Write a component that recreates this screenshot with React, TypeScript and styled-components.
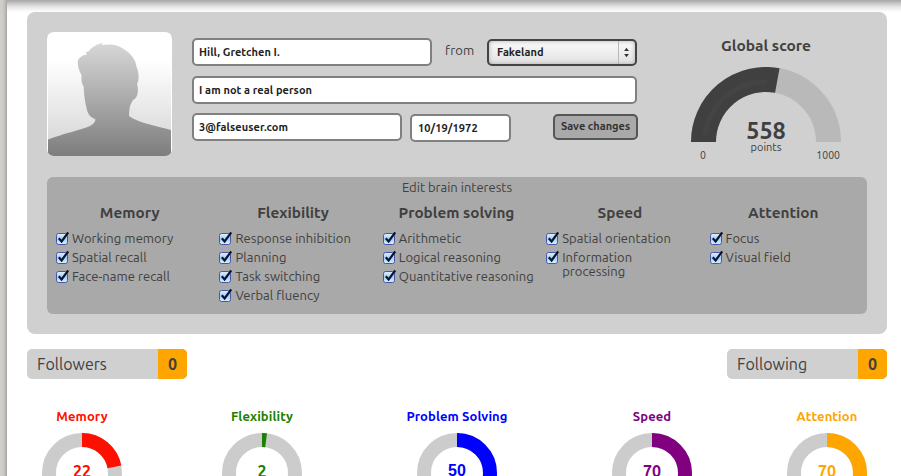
import React from "react";
import styled, { createGlobalStyle } from "styled-components";

const GlobalStyle = createGlobalStyle`
  * { box-sizing: border-box; }
  body { margin: 0; background: #fff; overflow: hidden; }
  body, input, select, button { font-family: Ubuntu, "Noto Sans", sans-serif; color: #404040; }
`;

const Page = styled.div`
  display: flex;
  width: 901px;
  height: 476px;
  overflow: hidden;
  background: linear-gradient(#a6a6a6 0, #c4c4c4 3px, #e6e6e6 7px, #fafafa 11px, #fff 13px);
`;

const Backdrop = styled.div`
  flex: 0 0 7px;
  background: linear-gradient(90deg, #d1d0cd 0, #cccbc8 3px, #bdbcb9 5px, #a5a4a2 7px);
`;

const Content = styled.main`
  width: 860px;
  margin: 12px 0 0 20px;
`;

const Profile = styled.section`
  height: 322px;
  padding: 20px;
  border-radius: 8px;
  background: #d0d0d0;
`;

const ProfileTop = styled.div`
  display: flex;
  height: 145px;
`;

const Avatar = styled.svg`
  flex: 0 0 125px;
  height: 124px;
  border-radius: 7px;
`;

const Form = styled.form`
  width: 446px;
  margin: 6px 0 0 20px;
`;

const FormRow = styled.div<{ $gap: number }>`
  display: flex;
  align-items: flex-start;
  height: 28px;
  margin-bottom: ${(p) => p.$gap}px;
`;

const Field = styled.input<{ $width: number; $drop?: number; $after?: number; $pad?: number }>`
  width: ${(p) => p.$width}px;
  height: 28px;
  margin: ${(p) => p.$drop ?? 0}px ${(p) => p.$after ?? 0}px 0 0;
  padding: 0 ${(p) => p.$pad ?? 5}px;
  border: 2px solid #808080;
  border-radius: 5px;
  outline: none;
  background: #fff;
  color: #222;
  font-size: 11px;
  font-weight: 700;
  letter-spacing: 0.08px;
`;

const From = styled.span`
  width: 55px;
  padding-left: 13px;
  font-size: 13px;
  line-height: 24px;
  letter-spacing: 0.2px;
`;

const Select = styled.button`
  display: flex;
  align-items: center;
  width: 150px;
  height: 27px;
  margin-top: 1px;
  padding: 0;
  border: 2px solid #444;
  border-radius: 5px;
  background: linear-gradient(#fafafa, #e2e2e2);
  box-shadow: inset 0 0 4px #aaa;
`;

const SelectValue = styled.span`
  flex: 1;
  padding: 0 0 1px 8px;
  color: #222;
  text-align: left;
  font-size: 11px;
  font-weight: 700;
`;

const SelectArrows = styled.svg`
  width: 17px;
  height: 23px;
  border-left: 1px solid #b8b8b8;
`;

const Save = styled.button`
  width: 85px;
  height: 26px;
  margin: 1px 0 0 42px;
  padding: 0 0 2px;
  border: 2px solid #555;
  border-radius: 5px;
  background: #a9a9a9;
  color: #333;
  font-size: 11px;
  font-weight: 700;
  white-space: nowrap;
`;

const Score = styled.div`
  width: 150px;
  margin-left: 53px;
`;

const ScoreTitle = styled.h2`
  margin: 3px 0 0;
  text-align: center;
  font-size: 15.5px;
  line-height: 22px;
`;

const Gauge = styled.div`
  display: grid;
  height: 87px;
  margin-top: 10px;

  > * { grid-area: 1 / 1; }
`;

const GaugeReading = styled.div`
  align-self: end;
  text-align: center;
`;

const ScoreValue = styled.div`
  font-size: 23.4px;
  font-weight: 700;
  line-height: 20px;
`;

const ScoreUnit = styled.div`
  font-size: 11px;
  line-height: 14px;
`;

const GaugeScale = styled.div`
  display: flex;
  justify-content: space-between;
  padding: 0 1px 0 9px;
  margin-top: -6px;
  font-size: 10.5px;
  line-height: 14px;
`;

const Interests = styled.section`
  height: 137px;
  border-radius: 6px;
  background: #a9a9a9;
`;

const InterestsTitle = styled.div`
  height: 21px;
  text-align: center;
  font-size: 13px;
  line-height: 20px;
`;

const InterestColumns = styled.div`
  display: grid;
  grid-template-columns: repeat(5, 163.4px);
`;

const InterestColumn = styled.div`
  padding-left: 9px;
`;

const InterestHeading = styled.h3`
  margin: 0 0 4px -9px;
  padding-left: 2px;
  text-align: center;
  font-size: 15.3px;
  line-height: 29px;
`;

const Interest = styled.label`
  display: flex;
  gap: 3px;
  margin-bottom: 5px;
  font-size: 13px;
  line-height: 14px;
  letter-spacing: 0.05px;
  white-space: pre;
`;

const CheckIcon = styled.svg`
  flex: 0 0 13px;
  height: 15px;
  margin-bottom: -1px;
`;

const Counters = styled.div`
  display: flex;
  justify-content: space-between;
  margin-top: 15px;
`;

const Counter = styled.div`
  display: flex;
  width: 160px;
  height: 30px;
  border-radius: 5px;
  overflow: hidden;
  background: #d0d0d0;
  font-size: 16px;
  line-height: 30px;
`;

const CounterName = styled.span`
  flex: 1;
  padding-left: 10px;
`;

const CounterValue = styled.strong`
  width: 29px;
  background: #ffa500;
  text-align: center;
`;

const Rings = styled.div`
  display: grid;
  grid-template-columns: 110px 250px 140px 250px 100px;
  justify-items: center;
  margin-top: 26px;
`;

const Ring = styled.div<{ $color: string }>`
  color: ${(p) => p.$color};
  text-align: center;
`;

const RingTitle = styled.div`
  height: 28px;
  font-size: 13px;
  font-weight: 700;
  line-height: 22px;
  letter-spacing: 0.1px;
  white-space: nowrap;
`;

const RingChart = styled.div`
  display: grid;
  justify-items: center;

  > * { grid-area: 1 / 1; }
`;

const RingValue = styled.span<{ $plain?: boolean }>`
  margin-top: 29px;
  font-family: ${(p) => (p.$plain ? '"Liberation Sans"' : 'Ubuntu, "Noto Sans"')}, sans-serif;
  font-size: 16px;
  font-weight: 700;
  line-height: 18px;
`;

const interests = [
  { name: "Memory", items: ["Working memory", "Spatial recall", "Face-name recall"] },
  { name: "Flexibility", items: ["Response inhibition", "Planning", "Task switching", "Verbal fluency"] },
  { name: "Problem solving", items: ["Arithmetic", "Logical reasoning", "Quantitative reasoning"] },
  { name: "Speed", items: ["Spatial orientation", "Information\nprocessing"] },
  { name: "Attention", items: ["Focus", "Visual field"] },
];

const scores = [
  { name: "Memory", value: 22, color: "#ff0f00" },
  { name: "Flexibility", value: 2, color: "#1e8000" },
  { name: "Problem Solving", value: 50, color: "#0000ff", plain: true },
  { name: "Speed", value: 70, color: "#800080" },
  { name: "Attention", value: 70, color: "#ffa500" },
];

function Check() {
  return (
    <CheckIcon viewBox="0 0 13 15">
      <defs>
        <linearGradient id="box" x1="0" y1="0" x2="0" y2="1">
          <stop offset="0" stopColor="#e4f0fc" />
          <stop offset=".5" stopColor="#a4cff8" />
          <stop offset="1" stopColor="#d4f4ff" />
        </linearGradient>
      </defs>
      <rect x=".5" y="2.500" width="11" height="11" rx="2" fill="url(#box)" stroke="#4a55a8" />
      <path d="M2.800 7.200 5.600 10.400 12.200 1.400" fill="none" stroke="#0a1330" strokeWidth="2.200" />
    </CheckIcon>
  );
}

function Portrait() {
  return (
    <Avatar viewBox="0 0 125 124">
      <defs>
        <linearGradient id="sky" x1="0" y1="0" x2="0" y2="1">
          <stop offset=".22" stopColor="#fff" />
          <stop offset="1" stopColor="#d2d2d2" />
        </linearGradient>
        <linearGradient id="person" x1="0" y1="10" x2="0" y2="124" gradientUnits="userSpaceOnUse">
          <stop offset="0" stopColor="#d8d8d8" />
          <stop offset="1" stopColor="#7d7d7d" />
        </linearGradient>
      </defs>
      <rect width="125" height="124" fill="#fff" />
      <rect x="1" y="1" width="123" height="123" fill="url(#sky)" />
      <path
        d="M1 107.500C15 102 34 98 43 94Q48 91 48.500 87.500C45 85 42 85 40 78C38 70 37 63 36.500 54Q34 51 34.500 43C31 37 30.500 31 31 28Q34 23 40 22.500L38.500 20Q42 20 43.500 17Q49 12 56 11L54.500 13L62 12.500Q69 12 75 16C84 21 89 28 89.500 35C92 40 92.500 48 90 52C92 58 91 66 86 68C82 74 82.500 78 82 84C92 91 106 93 124 98V124H1Z"
        fill="url(#person)"
      />
    </Avatar>
  );
}

function RingDrawing({ value, color }: { value: number; color: string }) {
  const length = 2 * Math.PI * 33;
  return (
    <svg width="80" height="80" viewBox="0 0 80 80">
      <circle cx="40" cy="40" r="33" fill="none" stroke="#ccc" strokeWidth="14" />
      <circle
        cx="40"
        cy="40"
        r="33"
        fill="none"
        stroke={color}
        strokeWidth="14"
        strokeDasharray={`${(length * value) / 100} ${length}`}
        transform="rotate(-90 40 40)"
      />
    </svg>
  );
}

export default function App() {
  return (
    <>
      <GlobalStyle />
      <Page>
        <Backdrop />
        <Content>
          <Profile>
            <ProfileTop>
              <Portrait />
              <Form>
                <FormRow $gap={10}>
                  <Field $width={240} defaultValue="Hill, Gretchen I." />
                  <From>from</From>
                  <Select type="button">
                    <SelectValue>Fakeland</SelectValue>
                    <SelectArrows viewBox="0 0 17 23">
                      <path d="M5.500 10 8 6.500 10.500 10ZM5.500 13 8 16.500 10.500 13Z" fill="#333" />
                    </SelectArrows>
                  </Select>
                </FormRow>
                <FormRow $gap={9}>
                  <Field $width={445} defaultValue="I am not a real person" />
                </FormRow>
                <FormRow $gap={0}>
                  <Field $width={210} $after={8} defaultValue="3@falseuser.com" />
                  <Field $width={101} $drop={1} $pad={6} defaultValue="10/19/1972" />
                  <Save type="button">Save changes</Save>
                </FormRow>
              </Form>
              <Score>
                <ScoreTitle>Global score</ScoreTitle>
                <Gauge>
                  <svg width="150" height="75" viewBox="0 0 150 75">
                    <path d="M12.500 75A62.500 62.500 0 0 1 137.500 75" fill="none" stroke="#b9b9b9" strokeWidth="25" />
                    <path d="M12.500 75A62.500 62.500 0 0 1 86.300 13.500" fill="none" stroke="#404040" strokeWidth="25" />
                    <path d="M14 68A61 61 0 0 1 76 15" fill="none" stroke="#444" strokeWidth="5" />
                  </svg>
                  <GaugeReading>
                    <ScoreValue>558</ScoreValue>
                    <ScoreUnit>points</ScoreUnit>
                  </GaugeReading>
                </Gauge>
                <GaugeScale>
                  <span>0</span>
                  <span>1000</span>
                </GaugeScale>
              </Score>
            </ProfileTop>
            <Interests>
              <InterestsTitle>Edit brain interests</InterestsTitle>
              <InterestColumns>
                {interests.map(({ name, items }) => (
                  <InterestColumn key={name}>
                    <InterestHeading>{name}</InterestHeading>
                    {items.map((text) => (
                      <Interest key={text}>
                        <Check />
                        {text}
                      </Interest>
                    ))}
                  </InterestColumn>
                ))}
              </InterestColumns>
            </Interests>
          </Profile>
          <Counters>
            <Counter>
              <CounterName>Followers</CounterName>
              <CounterValue>0</CounterValue>
            </Counter>
            <Counter>
              <CounterName>Following</CounterName>
              <CounterValue>0</CounterValue>
            </Counter>
          </Counters>
          <Rings>
            {scores.map((s) => (
              <Ring key={s.name} $color={s.color}>
                <RingTitle>{s.name}</RingTitle>
                <RingChart>
                  <RingDrawing value={s.value} color={s.color} />
                  <RingValue $plain={s.plain}>{s.value}</RingValue>
                </RingChart>
              </Ring>
            ))}
          </Rings>
        </Content>
      </Page>
    </>
  );
}
